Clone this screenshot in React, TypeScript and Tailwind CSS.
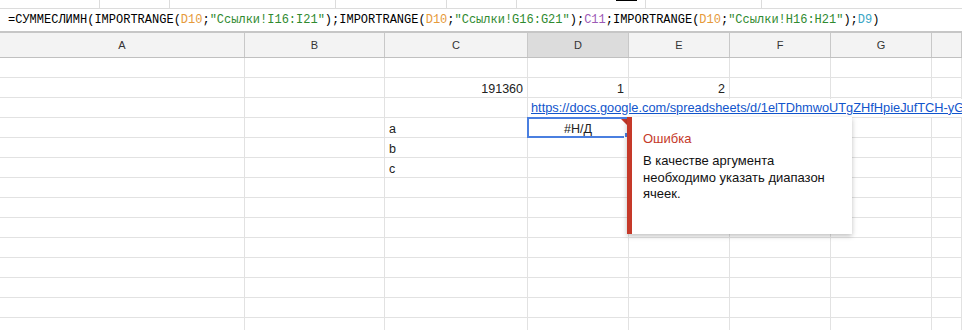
import React from "react";

const cols = ["A", "B", "C", "D", "E", "F", "G", ""];

function Row({ children }: { children?: React.ReactNode }) {
  return (
    <div className="grid h-[20px] grid-cols-[245px_140px_143px_101px_101px_101px_101px_1fr] border-b border-[#e2e2e2]">
      {children}
    </div>
  );
}

function Cell({ children, className = "" }: { children?: React.ReactNode; className?: string }) {
  return (
    <div className={`flex h-full items-center border-r border-[#e2e2e2] px-[4px] pt-[2px] whitespace-nowrap ${className}`}>
      {children}
    </div>
  );
}

function EmptyRow() {
  return (
    <Row>
      {cols.map((_, i) => (
        <Cell key={i} />
      ))}
    </Row>
  );
}

export default function App() {
  return (
    <div className="relative h-[330px] w-[962px] overflow-hidden bg-white font-['Liberation_Sans',Arial,sans-serif] text-[12.5px] text-[#222]">
      {/* top strip remnants */}
      <div className="flex h-[9px] border-b border-[#dcdcdc]">
        <div className="w-[100px] border-r border-[#dcdcdc]" />
        <div className="w-[70px] border-r border-[#dcdcdc]" />
        <div className="w-[166px] border-r border-[#dcdcdc]" />
        <div className="w-[111px] border-r border-[#dcdcdc]" />
        <div className="w-[70px] border-r border-[#dcdcdc]" />
        <div className="w-[129px] border-r border-[#dcdcdc]">
          <div className="ml-[99px] h-px w-[21px] bg-black" />
        </div>
        <div className="w-[116px] border-r border-[#dcdcdc]" />
        <div className="flex-1" />
      </div>

      {/* formula bar */}
      <div className="flex h-[24px] items-center border-b-2 border-[#c6c6c6] pl-[8px] font-['Liberation_Mono',monospace] text-[12px] whitespace-nowrap text-black">
        <span>=СУММЕСЛИМН(IMPORTRANGE(</span>
        <span className="text-[#e69a3a]">D10</span>
        <span>;</span>
        <span className="text-[#2f8a2f]">"Ссылки!I16:I21"</span>
        <span>);IMPORTRANGE(</span>
        <span className="text-[#e69a3a]">D10</span>
        <span>;</span>
        <span className="text-[#2f8a2f]">"Ссылки!G16:G21"</span>
        <span>);</span>
        <span className="text-[#9b59b6]">C11</span>
        <span>;IMPORTRANGE(</span>
        <span className="text-[#e69a3a]">D10</span>
        <span>;</span>
        <span className="text-[#2f8a2f]">"Ссылки!H16:H21"</span>
        <span>);</span>
        <span className="text-[#3aa6c6]">D9</span>
        <span>)</span>
      </div>

      {/* column header */}
      <div className="grid h-[25px] grid-cols-[245px_140px_143px_101px_101px_101px_101px_1fr] border-b border-[#c0c0c0] bg-[#f3f3f3] text-[11px] text-[#333]">
        {cols.map((c, i) => (
          <div
            key={i}
            className={`flex items-center justify-center border-r border-[#c8c8c8] ${c === "D" ? "bg-[#dcdcdc]" : ""}`}
          >
            {c}
          </div>
        ))}
      </div>

      {/* rows */}
      <EmptyRow />
      <Row>
        <Cell />
        <Cell />
        <Cell className="justify-end">191360</Cell>
        <Cell className="justify-end">1</Cell>
        <Cell className="justify-end">2</Cell>
        <Cell />
        <Cell />
        <Cell />
      </Row>
      <Row>
        <Cell />
        <Cell />
        <Cell />
        <div className="col-span-5 flex h-full items-center overflow-hidden whitespace-nowrap pl-[3px]">
          <span className="text-[12.8px] text-[#1155cc] underline">
            https://docs.google.com/spreadsheets/d/1elTDhmwoUTgZHfHpieJufTCH-yG
          </span>
        </div>
      </Row>
      <Row>
        <Cell />
        <Cell />
        <Cell>a</Cell>
        <Cell className="justify-center">#Н/Д</Cell>
        <Cell />
        <Cell />
        <Cell />
        <Cell />
      </Row>
      <Row>
        <Cell />
        <Cell />
        <Cell>b</Cell>
        <Cell />
        <Cell />
        <Cell />
        <Cell />
        <Cell />
      </Row>
      <Row>
        <Cell />
        <Cell />
        <Cell>c</Cell>
        <Cell />
        <Cell />
        <Cell />
        <Cell />
        <Cell />
      </Row>
      {Array.from({ length: 9 }).map((_, i) => (
        <EmptyRow key={i} />
      ))}

      {/* selection */}
      <div className="absolute left-[527px] top-[117px] h-[21px] w-[102px] border-2 border-[#4a7fe0]" />
      <div className="absolute left-[624px] top-[132px] h-[6px] w-[6px] border border-white bg-[#4a7fe0]" />
      {/* error triangle */}
      <div className="absolute left-[621px] top-[119px] h-0 w-0 border-l-[6px] border-t-[6px] border-l-transparent border-t-[#c53929]" />

      {/* error popup */}
      <div className="absolute left-[627px] top-[117px] h-[117px] w-[225px] border-l-[5px] border-[#c53929] bg-white pl-[11px] pt-[14px] shadow-[0_2px_5px_rgba(0,0,0,0.25)]">
        <div className="text-[13px] leading-[16px] text-[#c53929]">Ошибка</div>
        <div className="mt-[6px] text-[13px] leading-[16.5px] whitespace-nowrap text-[#111]">
          В качестве аргумента
          <br />
          необходимо указать диапазон
          <br />
          ячеек.
        </div>
      </div>
    </div>
  );
}
